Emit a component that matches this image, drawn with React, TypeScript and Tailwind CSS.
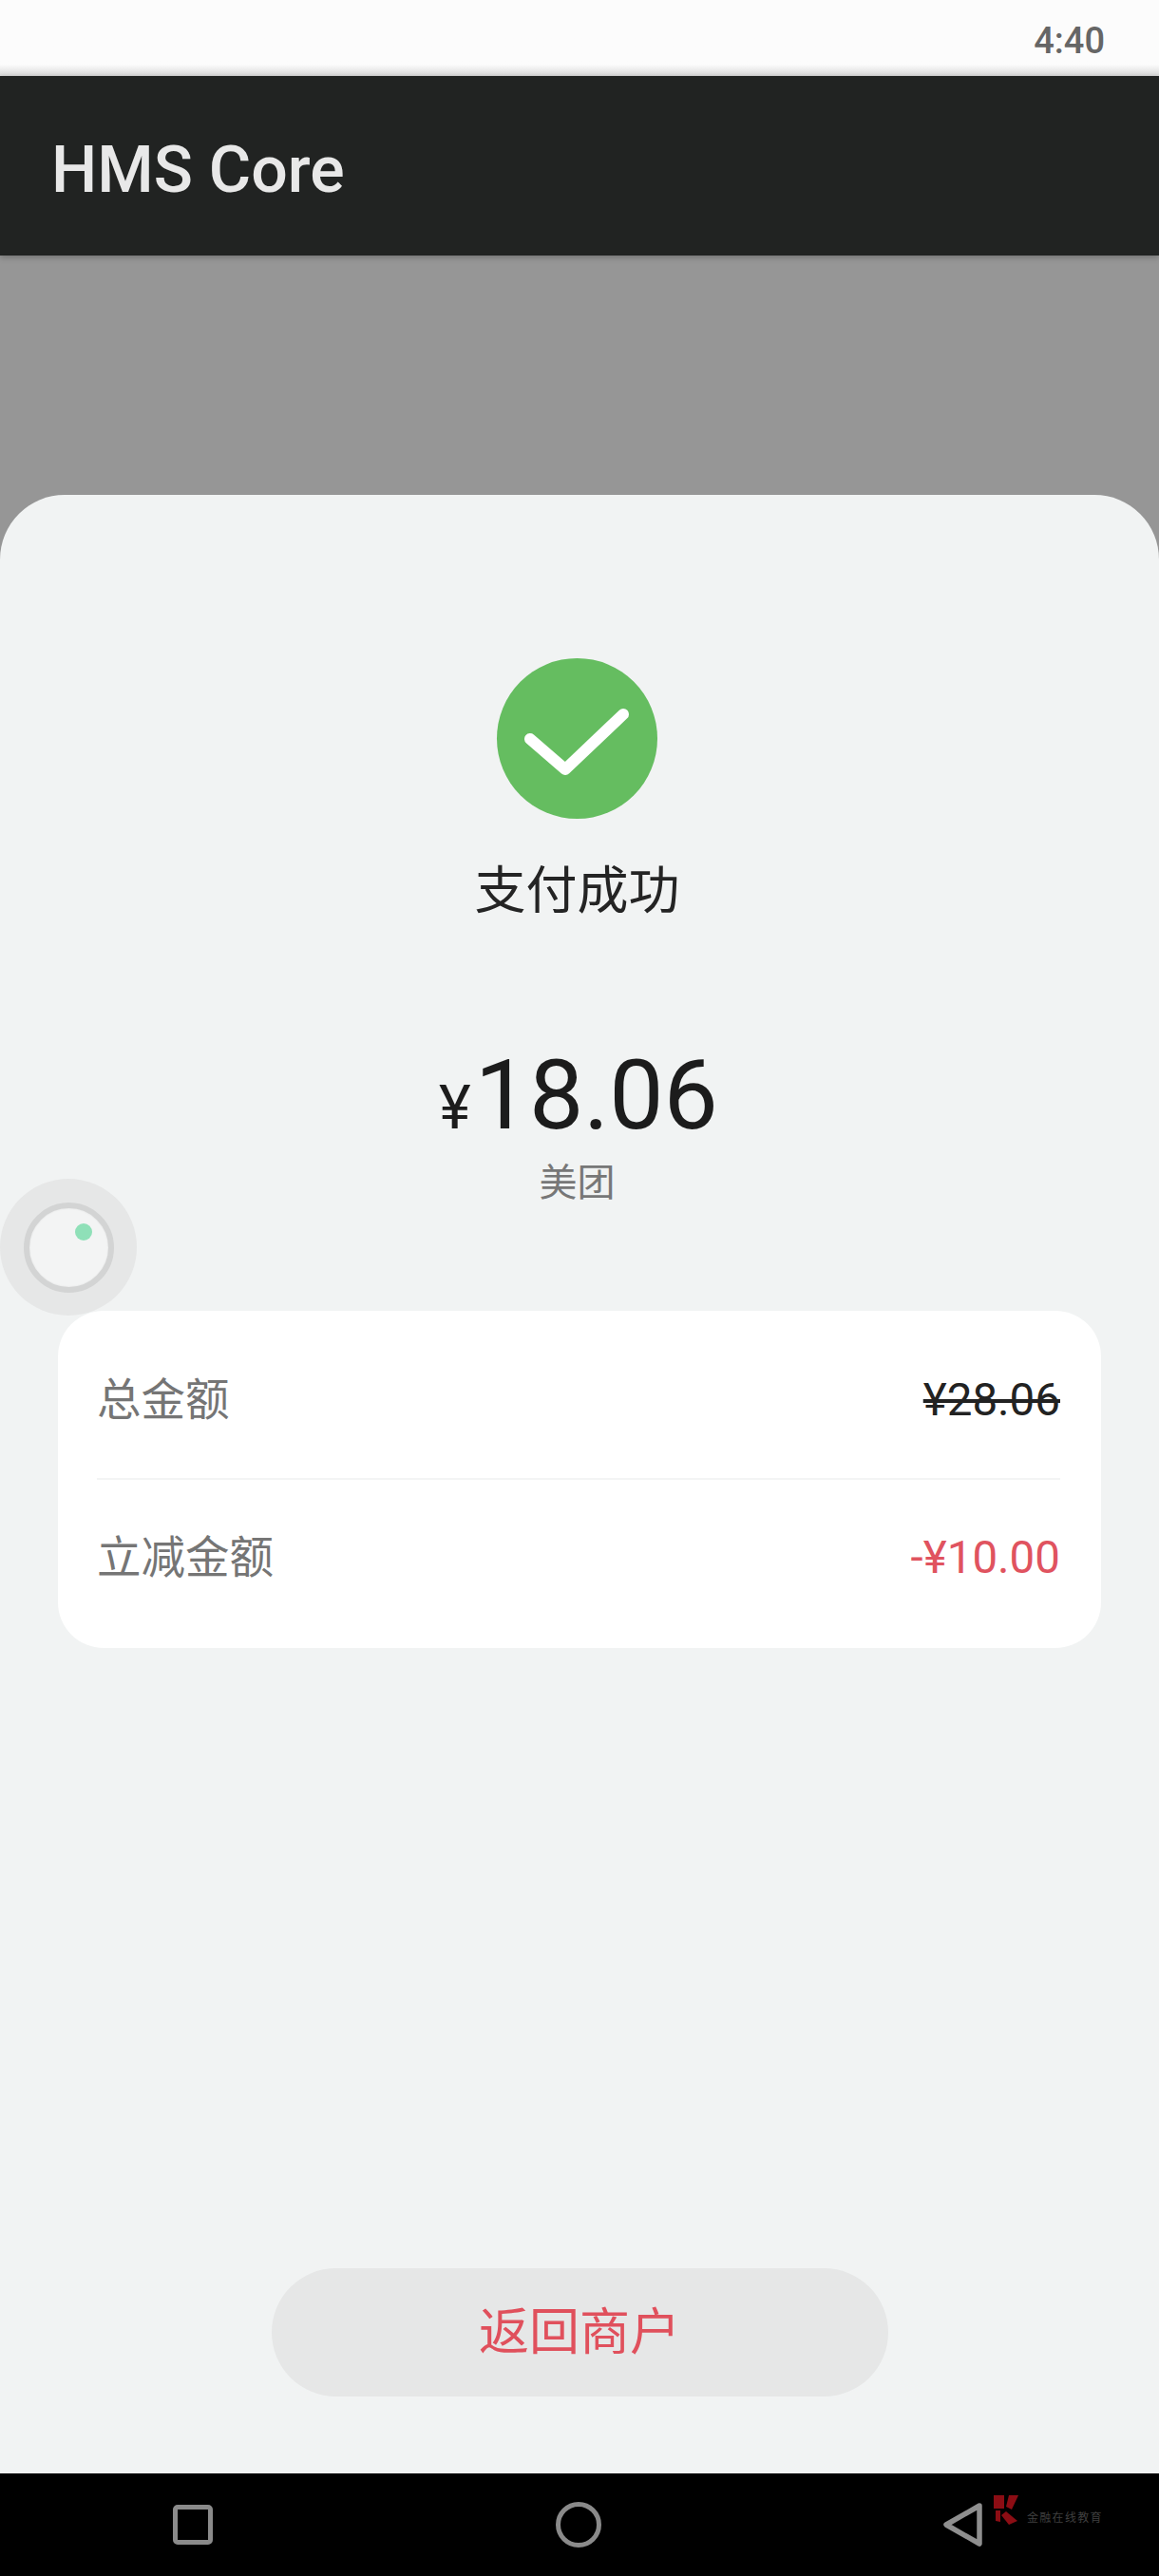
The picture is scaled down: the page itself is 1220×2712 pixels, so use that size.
const font = "font-['Roboto','Noto_Sans_CJK_SC',sans-serif]";

function FloatingBall() {
  return (
    <div className="absolute left-0 top-[720px] flex h-[144px] w-[144px] items-center justify-center rounded-full bg-[#e6e7e7]">
      <div className="relative h-[95px] w-[95px] rounded-full border-[6px] border-[#d3d4d4] bg-[#f3f4f4] shadow-[inset_0_0_2px_rgba(0,0,0,0.08)]">
        <div className="absolute left-[48px] top-[16px] h-[18px] w-[18px] rounded-full bg-[#8fe0b8]" />
      </div>
    </div>
  );
}

function Row({ label, className, children }: { label: string; className: string; children: React.ReactNode }) {
  return (
    <div className={`flex flex-1 items-center justify-between ${className}`}>
      <span className="text-[46.5px] leading-[56px] text-[#757575]">{label}</span>
      {children}
    </div>
  );
}

export default function App() {
  return (
    <div className={`${font} flex h-[2712px] w-[1220px] flex-col overflow-hidden bg-[#969696]`}>
      {/* status bar */}
      <div className="flex h-[80px] items-center justify-end bg-gradient-to-b from-[#fcfcfc] from-85% to-[#d8d8d8] pr-[57px] pt-[6px]">
        <span className="text-[38px] font-medium leading-[44px] text-[#666666]">4:40</span>
      </div>

      {/* app bar */}
      <div className="flex h-[189px] items-center bg-[#212322] pl-[54px] pt-[8px] shadow-[0_2px_6px_rgba(0,0,0,0.25)]">
        <span className="text-[68px] font-medium leading-[76px] text-[#e8e8e8]">HMS Core</span>
      </div>

      {/* sheet */}
      <div className="flex flex-1 flex-col pt-[252px]">
        <div className="relative flex flex-1 flex-col items-center rounded-t-[68px] bg-[#f1f3f3] pt-[172px]">
          <FloatingBall />

          <div className="flex flex-col items-center self-stretch pr-[5px]">
            <div className="flex h-[169px] w-[169px] items-center justify-center rounded-full bg-[#65bd60]">
              <svg width="169" height="169" viewBox="0 0 169 169" fill="none">
                <path d="M35 85 L72 117 L133 59" stroke="#ffffff" strokeWidth="12" strokeLinecap="round" strokeLinejoin="round" />
              </svg>
            </div>

            <div className="mt-[45px] text-[54px] leading-[64px] text-[#242424]">支付成功</div>

            <div className="ml-[3px] mt-[122px] flex items-baseline text-[#1c1c1c]">
              <span className="mr-[4px] text-[64px] leading-[120px]">¥</span>
              <span className="text-[102px] leading-[120px]">18.06</span>
            </div>

            <div className="mt-[-5px] text-[40px] leading-[48px] text-[#777777]">美团</div>
          </div>

          <div className="mt-[110px] flex h-[355px] w-[1098px] flex-col rounded-[48px] bg-white pl-[41px] pr-[43px]">
            <Row label="总金额" className="pt-[12px]">
              <span className="text-[47.5px] leading-[56px] text-[#222222] line-through">¥28.06</span>
            </Row>
            <div className="h-[2px] bg-[#f3f4f4]" />
            <Row label="立减金额" className="pb-[13px]">
              <span className="text-[47.5px] leading-[56px] text-[#e0535f]">-¥10.00</span>
            </Row>
          </div>

          <div className="mb-[81px] mt-auto flex h-[135px] w-[649px] items-center justify-center rounded-full bg-[#e6e7e7]">
            <span className="text-[53px] leading-[64px] text-[#e0505c]">返回商户</span>
          </div>
        </div>

        {/* nav bar */}
        <div className="relative flex h-[108px] items-center justify-between bg-black pl-[182px] pr-[185px]">
          <div className="h-[42px] w-[42px] rounded-[5px] border-[5px] border-[#8a8a8a]" />
          <div className="h-[48px] w-[48px] rounded-full border-[5px] border-[#8a8a8a]" />
          <svg width="42" height="46" viewBox="0 0 42 46" fill="none">
            <path d="M38 3 L3 23 L38 43 Z" stroke="#8f8f8f" strokeWidth="5.5" strokeLinejoin="round" />
          </svg>

          <div className="absolute left-[1045px] top-[23px] flex items-end">
            <svg width="28" height="32" viewBox="0 0 28 32" fill="#8c0d14">
              <path d="M1 0 H12 V14 H1 Z" />
              <path d="M17 0 H27 L20 15 L14 12 Z" />
              <path d="M9 21 L14 17 L26 27 L17 31 Z" />
              <path d="M3 16 H8 L8 28 L3 27 Z" />
            </svg>
            <span className="ml-[8px] text-[12px] leading-[16px] tracking-[1.3px] text-[#3f3f3f]">金融在线教育</span>
          </div>
        </div>
      </div>
    </div>
  );
}
